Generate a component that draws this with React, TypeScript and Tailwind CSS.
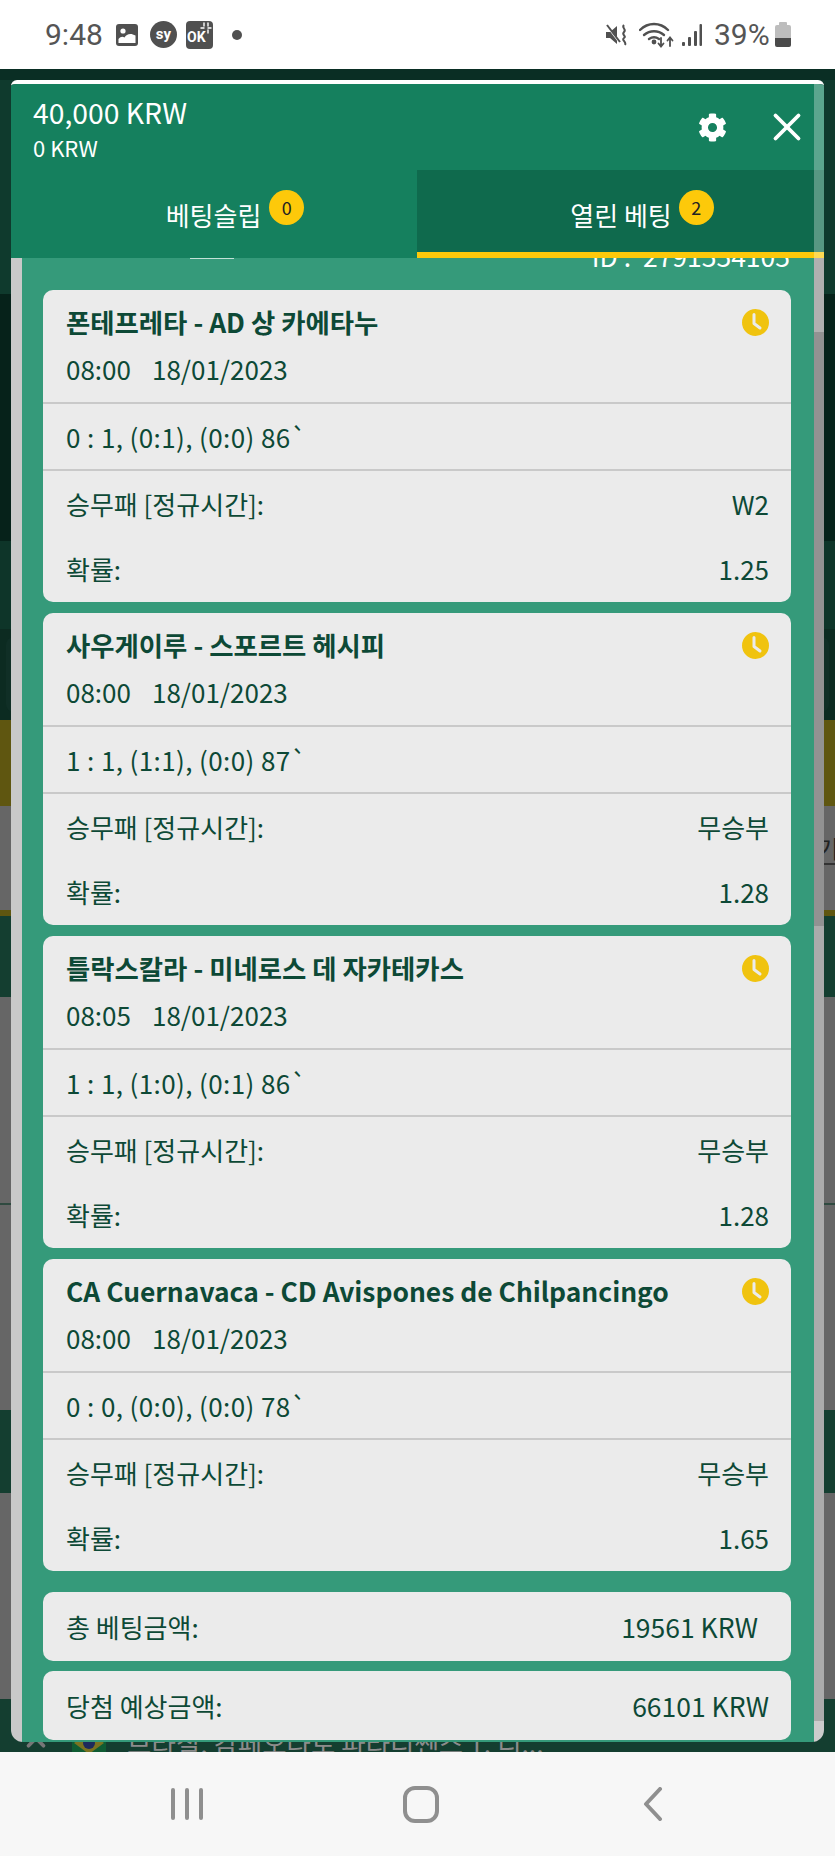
import { FaCog } from 'react-icons/fa';
import { X, ChevronUp } from 'lucide-react';

const FONT = '"Noto Sans CJK KR", "Noto Sans", sans-serif';

const bets = [
  { title: '폰테프레타 - AD 상 카에타누', time: '08:00', score: '0 : 1, (0:1), (0:0) 86`', pick: 'W2', odds: '1.25' },
  { title: '사우게이루 - 스포르트 헤시피', time: '08:00', score: '1 : 1, (1:1), (0:0) 87`', pick: '무승부', odds: '1.28' },
  { title: '틀락스칼라 - 미네로스 데 자카테카스', time: '08:05', score: '1 : 1, (1:0), (0:1) 86`', pick: '무승부', odds: '1.28' },
  { title: 'CA Cuernavaca - CD Avispones de Chilpancingo', time: '08:00', score: '0 : 0, (0:0), (0:0) 78`', pick: '무승부', odds: '1.65' },
];

const ClockIcon = () => (
  <svg width="27" height="27" viewBox="0 0 27 27">
    <circle cx="13.5" cy="13.5" r="13.5" fill="#f0c30f" />
    <path d="M12 5.5v9l6 4.5" fill="none" stroke="#ebebeb" strokeWidth="3" strokeLinecap="round" strokeLinejoin="round" />
  </svg>
);

const StatusBar = () => (
  <div className="h-[69px] shrink-0 bg-white flex items-center text-[#555555] relative" style={{ fontFamily: 'Roboto, sans-serif' }}>
    <span className="ml-[45px] w-[71px] text-[30px] leading-none">9:48</span>
    <svg width="22" height="22" viewBox="0 0 22 22">
      <rect width="22" height="22" rx="3" fill="#505050" />
      <circle cx="7" cy="7" r="2.6" fill="#fff" />
      <path d="M2.5 19v-4c2-2.500 4-3 6-1.500 2-3.500 6-5 11-2v7.500z" fill="#fff" />
    </svg>
    <div className="ml-[12px] w-[27px] h-[27px] rounded-full bg-[#505050] text-white text-[15px] font-bold flex items-center justify-center">sy</div>
    <div className="ml-[9px] w-[27px] h-[28px] rounded-[4px] bg-[#505050] text-white text-[14px] font-bold pt-[8px] pl-[1px] leading-[16px] relative">
      OK
      <svg className="absolute right-[1px] top-[1px]" width="12" height="12" viewBox="0 0 12 12" fill="none" stroke="#fff" strokeWidth="1.400" strokeLinecap="round">
        <path d="M4 1v3M8 1v3M1 6h3M8 6h3M8 8v3" />
      </svg>
    </div>
    <div className="ml-[19px] w-[10px] h-[10px] rounded-full bg-[#505050]" />
    <div className="ml-auto flex items-center">
      <svg width="23" height="22" viewBox="0 0 23 22" fill="#505050">
        <path d="M0 8h4l7-6v18l-7-6H0z" />
        <path d="M1 2l13 17" stroke="#fff" strokeWidth="2" />
        <path d="M1 1l13 17" stroke="#505050" strokeWidth="2" />
        <path d="M18 1c-3 3 3 4 0 7s3 4 0 6 3 4 1 7" fill="none" stroke="#505050" strokeWidth="2" />
      </svg>
      <svg className="ml-[10px]" width="35" height="26" viewBox="0 0 35 26" fill="none" stroke="#505050" strokeWidth="2.400" strokeLinecap="round">
        <path d="M1 8c8-8 20-8 28 0" />
        <path d="M5 13c6-5 14-5 20 0" />
        <path d="M10 17c3-2 7-2 10 0" />
        <circle cx="15" cy="20" r="1.200" fill="#505050" />
        <path d="M22 16v8m-2.500-2.500l2.500 3 2.500-3" strokeWidth="1.800" />
        <path d="M31 24v-8m-2.500 2.500l2.500-3 2.500 3" strokeWidth="1.800" />
      </svg>
      <svg className="ml-[8px]" width="20" height="22" viewBox="0 0 20 22" fill="#505050">
        <rect x="0" y="18" width="3" height="4" rx="1" />
        <rect x="6" y="13" width="3" height="9" rx="1" />
        <rect x="12" y="7" width="3" height="15" rx="1" />
        <rect x="17.500" y="0" width="2.500" height="22" rx="1" />
      </svg>
      <span className="ml-[12px] w-[61px] text-[30px] leading-none">39%</span>
      <div className="w-[16px] h-[25px] mr-[44px] flex flex-col items-center">
        <div className="w-[8px] h-[3px] rounded-t-[1px] bg-[#bdbdbd]" />
        <div className="w-[16px] h-[13px] rounded-t-[2px] bg-[#bdbdbd]" />
        <div className="w-[16px] h-[9px] rounded-b-[2px] bg-[#4a4a4a]" />
      </div>
    </div>
  </div>
);

const Backdrop = () => (
  <div className="h-full flex flex-col">
    <div className="h-[11px] bg-[#0a2e24]" />
    <div className="h-[214px] bg-[#0f3a2d]" />
    <div className="h-[247px] bg-[#06221a]" />
    <div className="h-[88px] bg-[#0e3529]" />
    <div className="h-[91px] bg-[#0c2b21] px-[6px] py-[8px]">
      <div className="h-full rounded-[8px] bg-[#102f26]" />
    </div>
    <div className="h-[86px] bg-[#5f5610]" />
    <div className="h-[104px] bg-[#666666] flex justify-end items-start overflow-hidden">
      <span className="mt-[27px] mr-[-4px] text-[24px] leading-[30px] text-[#222222] border-b-2 border-[#333333]">기</span>
    </div>
    <div className="h-[6px] bg-[#5f5610]" />
    <div className="h-[81px] bg-[#143e30]" />
    <div className="h-[206px] bg-[#666666]" />
    <div className="h-[2px] bg-[#2f4a40]" />
    <div className="h-[205px] bg-[#666666]" />
    <div className="h-[83px] bg-[#143e30]" />
    <div className="h-[206px] bg-[#666666]" />
    <div className="flex-1 bg-[#143e30] overflow-hidden pt-[26px] pl-[21px] flex items-start gap-[21px]">
      <ChevronUp className="mt-[2px] text-[#777777]" size={30} strokeWidth={3} />
      <svg className="shrink-0 mt-[6px]" width="34" height="24" viewBox="0 0 34 24">
        <rect width="34" height="24" fill="#0f5c33" />
        <path d="M17 1l15 11-15 11L2 12z" fill="#7a7220" />
        <circle cx="17" cy="12" r="6" fill="#1d2a5c" />
      </svg>
      <span className="text-[26.5px] leading-[36px] text-[#8c8c8c] whitespace-nowrap">브라질, 캄페오나토 파라디쎈스 1. 디...</span>
    </div>
  </div>
);

const Badge = ({ n }: { n: number }) => (
  <div className="w-[35px] h-[35px] rounded-full bg-[#fdc90a] text-[#222222] text-[18px] flex items-center justify-center">{n}</div>
);

const Tabs = () => (
  <div className="h-[88px] shrink-0 flex text-white text-[26px]">
    <div className="w-[406px] bg-[#15805e] flex justify-center pl-[42px]">
      <span className="mt-[25px] leading-[40px]">베팅슬립</span>
      <div className="ml-[8px] mt-[20px]"><Badge n={0} /></div>
    </div>
    <div className="flex-1 bg-[#0f6a4d] border-b-[6px] border-[#fdc90a] flex justify-center pl-[43px]">
      <span className="mt-[25px] leading-[40px]">열린 베팅</span>
      <div className="ml-[7px] mt-[20px]"><Badge n={2} /></div>
    </div>
  </div>
);

const BetCard = ({ title, time, score, pick, odds }: (typeof bets)[number]) => (
  <div className="h-[312px] rounded-[10px] bg-[#ebebeb] text-[#0d4936] text-[26px]">
    <div className="h-[114px] pl-[23px] pr-[22px] border-b-2 border-[#c9c9c9]">
      <div className="flex justify-between items-start">
        <span className="font-bold text-[26.4px] leading-[63px] whitespace-nowrap">{title}</span>
        <div className="mt-[19px] shrink-0"><ClockIcon /></div>
      </div>
      <div className="leading-[32px]">
        <span>{time}</span>
        <span className="ml-[21px]">18/01/2023</span>
      </div>
    </div>
    <div className="h-[67px] pl-[23px] pr-[22px] flex items-center border-b-2 border-[#c9c9c9] tracking-[0.4px]">{score}</div>
    <div className="h-[65px] pl-[23px] pr-[22px] flex items-center justify-between">
      <span>승무패 [정규시간]:</span>
      <span>{pick}</span>
    </div>
    <div className="h-[65px] pl-[23px] pr-[22px] flex items-center justify-between">
      <span>확률:</span>
      <span>{odds}</span>
    </div>
  </div>
);

const Modal = () => (
  <div className="absolute left-[11px] top-[11px] w-[813px] h-[1662px] rounded-t-[6px] rounded-b-[12px] border-t-4 border-white overflow-hidden flex flex-col" style={{ fontFamily: FONT }}>
    {/* header */}
    <div className="h-[86px] shrink-0 bg-[#15805e] text-white flex items-center pl-[22px] pr-[14px]">
      <div className="flex flex-col">
        <span className="text-[28.3px] leading-[44px] mt-[-3px]">40,000 KRW</span>
        <span className="text-[22px] leading-[30px] mt-[-2px]">0 KRW</span>
      </div>
      <FaCog className="ml-auto" size={29} />
      <X className="ml-[37px]" size={46} strokeWidth={2} />
    </div>
    <Tabs />

    {/* scroll area */}
    <div className="flex-1 flex min-h-0">
      <div className="w-[11px] shrink-0 bg-[#c9c9c9]" />
      <div className="w-[792px] bg-[#359a7a] pl-[21px] pr-[23px] overflow-hidden">
        <div className="h-[1px] w-[44px] ml-[147px] bg-white/70" />
        <div className="text-white text-[26.500px] leading-[32px] text-right mt-[-19px] mr-[1px] whitespace-pre">ID :  2791554105</div>
        <div className="mt-[18px] flex flex-col gap-[11px]">
          {bets.map((bet) => (
            <BetCard key={bet.title} {...bet} />
          ))}
        </div>
        <div className="mt-[21px] flex flex-col gap-[10px] text-[#0d4936] text-[26px]">
          <div className="h-[69px] rounded-[10px] bg-[#ebebeb] pl-[23px] pr-[33px] flex items-center justify-between">
            <span>총 베팅금액:</span>
            <span className="text-[26.500px]">19561 KRW</span>
          </div>
          <div className="h-[69px] rounded-[10px] bg-[#ebebeb] pl-[23px] pr-[22px] flex items-center justify-between">
            <span>당첨 예상금액:</span>
            <span className="text-[26.500px]">66101 KRW</span>
          </div>
        </div>
      </div>
    </div>

    {/* scrollbar over the panel */}
    <div className="absolute right-0 top-0 bottom-0 w-[10px] flex flex-col">
      <div className="h-[174px] bg-white/30" />
      <div className="h-[74px] bg-[#b0b0b0]" />
      <div className="h-[594px] bg-[#929292]" />
      <div className="h-[795px] bg-[#ababab]" />
      <div className="flex-1 bg-[#cccccc]" />
    </div>
  </div>
);

const NavBar = () => (
  <div className="flex-1 bg-[#f7f7f7] flex items-center">
    <svg className="ml-[170px]" width="34" height="34" viewBox="0 0 34 34" fill="none" stroke="#8f8f8f" strokeWidth="4" strokeLinecap="round">
      <path d="M3 3v28M17 3v28M31 3v28" />
    </svg>
    <svg className="ml-[199px]" width="36" height="37" viewBox="0 0 36 37" fill="none" stroke="#8f8f8f" strokeWidth="4">
      <rect x="2" y="2" width="32" height="33" rx="10" />
    </svg>
    <svg className="ml-[204px]" width="20" height="34" viewBox="0 0 20 34" fill="none" stroke="#8f8f8f" strokeWidth="4" strokeLinecap="round" strokeLinejoin="round">
      <path d="M17 2L3 17l14 15" />
    </svg>
  </div>
);

export default function App() {
  return (
    <div className="w-[835px] h-[1856px] flex flex-col overflow-hidden" style={{ fontFamily: FONT }}>
      <StatusBar />
      <div className="relative h-[1683px] shrink-0">
        <Backdrop />
        <Modal />
      </div>
      <NavBar />
    </div>
  );
}
